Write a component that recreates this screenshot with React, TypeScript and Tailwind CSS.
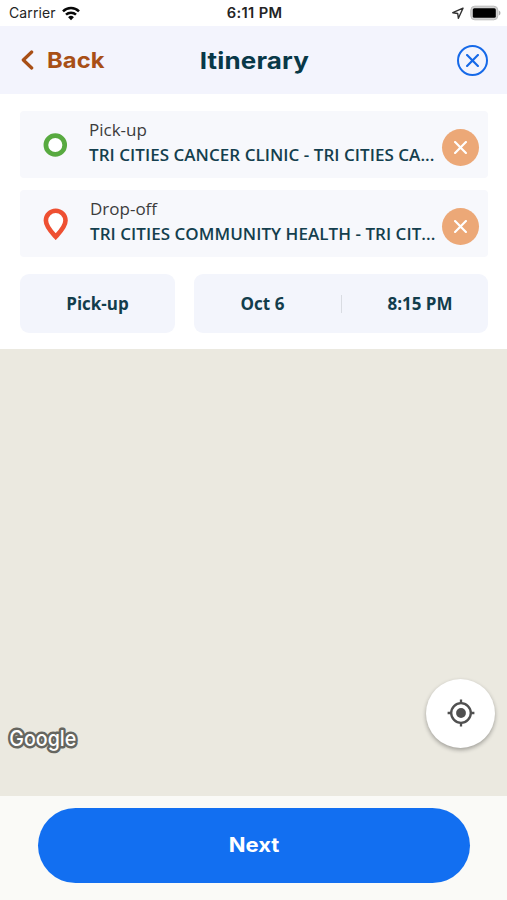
import React from "react";

function CloseGlyph({ className }: { className: string }) {
  return (
    <svg viewBox="0 0 12 12" className={className} fill="none" stroke="currentColor" strokeLinecap="round">
      <path d="M1 1 11 11M11 1 1 11" />
    </svg>
  );
}

function StatusBar() {
  return (
    <div className="flex h-[26px] shrink-0 items-center bg-white font-['Inter',sans-serif] text-[#242424]">
      <div className="flex flex-1 items-center pl-[9px]">
        <span className="text-[14px] leading-[26px] tracking-[0.12px]">Carrier</span>
        <svg className="ml-[6px] h-[15px] w-[18px]" viewBox="0 0 18 15" fill="none" stroke="#080808" strokeWidth="2.5">
          <path d="M1 5.3a11.4 11.4 0 0 1 16 0" />
          <path d="M4 8.7a7.2 7.2 0 0 1 10 0" />
          <path d="M9 14.2 6.1 11.2a4.2 4.2 0 0 1 5.8 0Z" fill="#080808" stroke="none" />
        </svg>
      </div>
      <span className="scale-x-[1.05] text-[14px] leading-[26px] font-semibold tracking-[0.35px]">6:11 PM</span>
      <div className="flex flex-1 items-center justify-end pr-[6px]">
        <svg className="h-3 w-3" viewBox="0 0 12 12" fill="none" stroke="#303030" strokeWidth="1.4" strokeLinejoin="round">
          <path d="M11 1.2.8 5.7l4.9.8.7 4.8Z" />
        </svg>
        <svg className="ml-[6px] h-4 w-[31px]" viewBox="0 0 31 16">
          <rect x="0.8" y="1.2" width="27" height="13.6" rx="4" fill="#d2d2d2" stroke="#bbb" strokeWidth="1" />
          <rect x="2.8" y="3.3" width="23" height="9.4" rx="1.5" fill="#000" />
          <path d="M28.8 5.5c2.2 1 2.2 4 0 5Z" fill="#aaa" />
        </svg>
      </div>
    </div>
  );
}

function Header() {
  return (
    <header className="flex h-[68px] shrink-0 items-center bg-[#f3f4fd] font-['Inter',sans-serif] font-bold">
      <button className="flex flex-1 items-center pl-[21px] text-[#a84f16]">
        <svg className="h-5 w-[13px]" viewBox="0 0 13 20" fill="none" stroke="currentColor" strokeWidth="3.2" strokeLinecap="round" strokeLinejoin="round">
          <path d="M10.7 2 2.3 10l8.4 8" />
        </svg>
        <span className="ml-[13px] origin-left scale-x-[1.08] text-[22px] leading-7 tracking-[0.1px]">Back</span>
      </button>
      <h1 className="scale-x-[1.13] pt-px text-[23px] leading-7 tracking-[0.15px] text-[#083848]">Itinerary</h1>
      <div className="flex flex-1 justify-end pr-[19px]">
        <button className="flex size-[31px] items-center justify-center rounded-full border-[2.5px] border-[#1669e8] text-[#1669e8]">
          <CloseGlyph className="size-[13px] stroke-2" />
        </button>
      </div>
    </header>
  );
}

interface StopProps {
  label: string;
  place: string;
  icon: React.ReactNode;
  textClass: string;
}

function Stop({ label, place, icon, textClass }: StopProps) {
  return (
    <div className="flex h-[67px] items-center rounded-[4px] bg-[#f7f8fc] pr-[9px] pl-[23px]">
      {icon}
      <div className={`min-w-0 flex-1 pb-[5px] whitespace-nowrap ${textClass}`}>
        <div className="text-[17px] leading-[25px] text-[#3c3c3c]">{label}</div>
        <div className="text-[17px] leading-[25px] font-semibold tracking-[0.04px] text-[#143f4e]">{place}</div>
      </div>
      <button className="mt-[6px] flex size-[37px] shrink-0 items-center justify-center rounded-full bg-[#eca877] text-white">
        <CloseGlyph className="size-[13px] stroke-2" />
      </button>
    </div>
  );
}

export default function App() {
  return (
    <div className="flex h-[900px] w-[507px] flex-col overflow-hidden bg-white font-['Open_Sans',sans-serif]">
      <StatusBar />
      <Header />
      <section className="flex h-[255px] shrink-0 flex-col pt-[17px] pr-[19px] pl-5">
        <Stop
          label="Pick-up"
          place="TRI CITIES CANCER CLINIC - TRI CITIES CA..."
          textClass="ml-[21px]"
          icon={
            <svg className="h-6 w-[25px] shrink-0" viewBox="0 0 25 24">
              <circle cx="12.3" cy="12" r="9.4" fill="#fff" stroke="#58aa40" strokeWidth="4.7" />
            </svg>
          }
        />
        <div className="h-3 shrink-0" />
        <Stop
          label="Drop-off"
          place="TRI CITIES COMMUNITY HEALTH - TRI CIT..."
          textClass="ml-[22px]"
          icon={
            <svg className="h-[32px] w-[25px] shrink-0" viewBox="0 0 25 32">
              <path d="M12.7 28.7C9.3 24.9 2.9 19 2.9 12.6a9.8 9.8 0 0 1 19.6 0c0 6.4-6.4 12.3-9.8 16.1Z" fill="#fff" stroke="#ee5032" strokeWidth="4.6" strokeLinejoin="miter" />
            </svg>
          }
        />
        <div className="mt-[17px] flex h-[59px] shrink-0 gap-[19px] text-[17px] font-bold text-[#123d4c]">
          <button className="w-[155px] rounded-[9px] bg-[#f3f5fc]">Pick-up</button>
          <div className="flex flex-1 items-center rounded-[9px] bg-[#f3f5fc]">
            <button className="w-[147px] pr-[10px]">Oct 6</button>
            <div className="h-[18px] w-px bg-[#d9dce2]" />
            <button className="flex-1 pl-[10px]">8:15 PM</button>
          </div>
        </div>
      </section>
      <main className="flex h-[447px] shrink-0 items-end justify-between bg-[#ebe9e0] pr-3 pb-[40px] pl-[5px]">
        <svg className="h-9 w-[76px] overflow-visible" viewBox="0 0 76 36">
          <text x="4.3" y="26" textLength="67" lengthAdjust="spacingAndGlyphs" fontFamily="Inter, sans-serif" fontSize="21" fontWeight="500" fill="#fff" stroke="#666660" strokeWidth="5" strokeLinejoin="round" paintOrder="stroke">Google</text>
        </svg>
        <button className="mb-[8px] flex size-[69px] items-center justify-center rounded-full bg-white text-[#505050] shadow-[0_2px_4px_rgba(0,0,0,0.32)]">
          <svg className="mb-px size-7" viewBox="0 0 28 28" fill="none" stroke="currentColor" strokeWidth="2.3">
            <circle cx="14" cy="14" r="9.8" />
            <circle cx="14" cy="14" r="4.9" fill="currentColor" stroke="none" />
            <path d="M14 .6v4M14 23.4v4M.6 14h4M23.4 14h4" />
          </svg>
        </button>
      </main>
      <footer className="h-[104px] shrink-0 bg-[#fafaf7] pt-3 pr-[37px] pl-[37.5px]">
        <button className="h-[74.5px] w-full rounded-full bg-[#126ff1] font-['Inter',sans-serif] text-[20px] font-bold text-white">
          <span className="inline-block scale-x-[1.1]">Next</span>
        </button>
      </footer>
    </div>
  );
}
